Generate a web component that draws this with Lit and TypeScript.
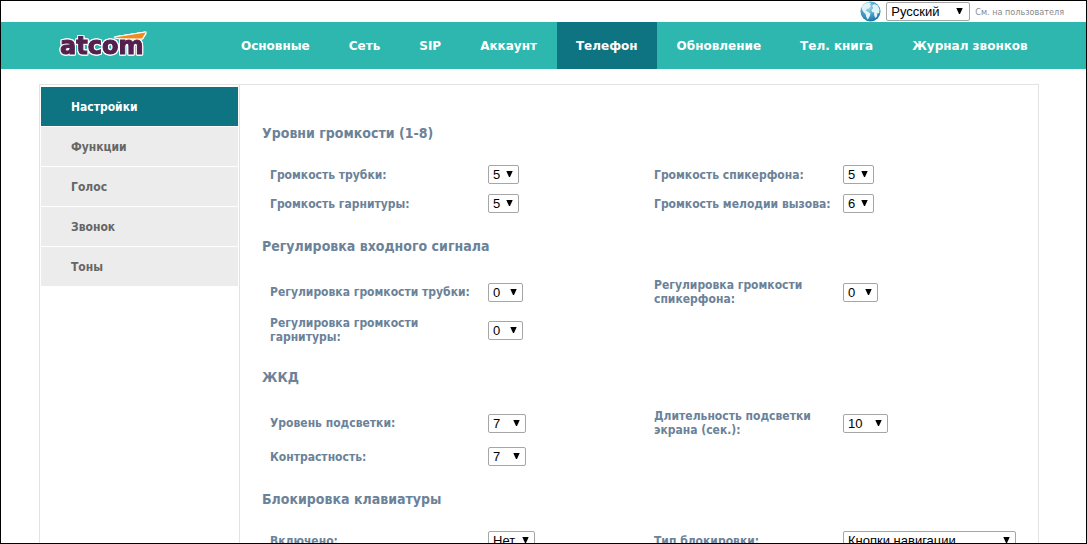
import { LitElement, html, css, nothing } from "lit";
import { customElement, property } from "lit/decorators.js";

interface Field {
  id: string;
  label: string;
  value: string;
  size: string;
}

interface Section {
  title: string;
  rows: [Field, Field?][];
}

const NAV = ["Основные", "Сеть", "SIP", "Аккаунт", "Телефон", "Обновление", "Тел. книга", "Журнал звонков"];
const MENU = ["Настройки", "Функции", "Голос", "Звонок", "Тоны"];

const SECTIONS: Section[] = [
  {
    title: "Уровни громкости (1-8)",
    rows: [
      [
        { id: "handset-volume", label: "Громкость трубки:", value: "5", size: "xs" },
        { id: "speaker-volume", label: "Громкость спикерфона:", value: "5", size: "xs" },
      ],
      [
        { id: "headset-volume", label: "Громкость гарнитуры:", value: "5", size: "xs" },
        { id: "ring-volume", label: "Громкость мелодии вызова:", value: "6", size: "xs" },
      ],
    ],
  },
  {
    title: "Регулировка входного сигнала",
    rows: [
      [
        { id: "handset-gain", label: "Регулировка громкости трубки:", value: "0", size: "s" },
        { id: "speaker-gain", label: "Регулировка громкости спикерфона:", value: "0", size: "s" },
      ],
      [{ id: "headset-gain", label: "Регулировка громкости гарнитуры:", value: "0", size: "s" }],
    ],
  },
  {
    title: "ЖКД",
    rows: [
      [
        { id: "backlight", label: "Уровень подсветки:", value: "7", size: "m" },
        { id: "backlight-time", label: "Длительность подсветки экрана (сек.):", value: "10", size: "l" },
      ],
      [{ id: "contrast", label: "Контрастность:", value: "7", size: "m" }],
    ],
  },
  {
    title: "Блокировка клавиатуры",
    rows: [
      [
        { id: "lock", label: "Включено:", value: "Нет", size: "word" },
        { id: "lock-type", label: "Тип блокировки:", value: "Кнопки навигации", size: "xl" },
      ],
    ],
  },
];

const selectStyles = css`
  select {
    appearance: none;
    box-sizing: border-box;
    height: 19px;
    margin: 0;
    padding: 0 14px 0 4px;
    border: 1px solid #a6a6a6;
    border-radius: 2px;
    background: #fff
      url("data:image/svg+xml,%3Csvg xmlns='http://www.w3.org/2000/svg' width='7' height='6'%3E%3Cpath d='M.3 0h6.400L4 6H3z'/%3E%3C/svg%3E")
      no-repeat right 5px top 5px;
    color: #000;
    font: 13px/17px "Liberation Sans", Arial, sans-serif;
  }
`;

@customElement("atcom-logo")
class AtcomLogo extends LitElement {
  static styles = css`
    :host {
      display: block;
    }
    svg {
      display: block;
    }
    .mark {
      filter: drop-shadow(1px 0 #fff) drop-shadow(-1px 0 #fff) drop-shadow(0 1px #fff) drop-shadow(0 -1px #fff);
    }
    .word {
      font: bold 24px "DejaVu Sans", Verdana, sans-serif;
      fill: #54204f;
      stroke: #54204f;
      stroke-width: 1px;
    }
  `;
  render() {
    return html`<svg width="100" height="38" viewBox="0 0 100 38" role="img" aria-label="atcom">
      <g class="mark">
        <text class="word" x="2" y="26">atcom</text>
        <path d="M56 9.400 L87.800 4.500 L84 10.600 L62 10.200 Z" fill="#f28a1c" />
      </g>
    </svg>`;
  }
}

@customElement("setting-field")
class SettingField extends LitElement {
  @property({ attribute: false }) field!: Field;

  static styles = [
    selectStyles,
    css`
      :host {
        display: contents;
      }
      label {
        align-self: center;
        padding: 5px 0;
        color: #6b8299;
        font-weight: bold;
        font-size: 12px;
        line-height: 14px;
      }
      select {
        align-self: center;
        justify-self: start;
      }
      .xs {
        width: 31px;
      }
      .s {
        width: 35px;
      }
      .m {
        width: 38px;
      }
      .l {
        width: 45px;
      }
      .word {
        width: 47px;
      }
      .xl {
        width: 173px;
      }
    `,
  ];

  render() {
    const f = this.field;
    return html`<label for=${f.id}>${f.label}</label>
      <select id=${f.id} class=${f.size}>
        <option>${f.value}</option>
      </select>`;
  }
}

@customElement("app-root")
class AppRoot extends LitElement {
  static styles = [
    selectStyles,
    css`
      :host {
        display: flex;
        flex-direction: column;
        box-sizing: border-box;
        height: 100vh;
        overflow: hidden;
        border: 1px solid #000;
        background: #fff;
        font-family: "DejaVu Sans Condensed", Tahoma, "Noto Sans", sans-serif;
      }
      a {
        text-decoration: none;
      }
      .top {
        display: flex;
        flex: none;
        align-items: center;
        justify-content: flex-end;
        gap: 5px;
        height: 21px;
        padding-right: 22px;
      }
      .top svg {
        display: block;
      }
      .top a {
        color: #8a8a8a;
        font-size: 9px;
      }
      .lang {
        width: 84px;
        background-position: right 6px top 5px;
      }
      .nav {
        display: flex;
        flex: none;
        gap: 1px;
        padding-left: 57px;
        background: #2db7ae;
      }
      .nav atcom-logo {
        flex: none;
        width: 163px;
        height: 41px;
        padding-top: 6px;
      }
      .nav a {
        padding: 1px 19px 0;
        color: #fff;
        font: bold 12px/46px "DejaVu Sans", Verdana, sans-serif;
        white-space: nowrap;
      }
      .nav .active,
      .menu .active {
        background: #0e7482;
        color: #fff;
      }
      .page {
        display: flex;
        flex: 1 0 auto;
        margin: 15px 47px 0 38px;
        border: 1px solid #e3e3e3;
        border-bottom: 0;
      }
      .menu {
        display: flex;
        flex: none;
        flex-direction: column;
        gap: 1px;
        box-sizing: border-box;
        width: 200px;
        padding: 2px 1px;
        border-right: 1px solid #e3e3e3;
      }
      .menu a {
        padding: 1px 0 0 30px;
        background: #ececec;
        color: #666;
        font-weight: bold;
        font-size: 12px;
        line-height: 38px;
      }
      .content {
        flex: 1;
        padding: 20px 0 0 22px;
      }
      h2 {
        margin: 0;
        padding: 19px 0 18px;
        color: #6b8299;
        font-size: 14px;
        line-height: 18px;
      }
      .row {
        display: grid;
        grid-template-columns: 218fr 166fr 189fr 195fr;
        min-height: 29px;
        padding-left: 8px;
      }
    `,
  ];

  render() {
    return html`
      <div class="top">
        <svg width="21" height="21" viewBox="0 0 21 21" aria-hidden="true">
          <defs>
            <radialGradient id="sea" cx=".4" cy=".3" r=".75">
              <stop offset="0" stop-color="#a8dcf0" />
              <stop offset=".55" stop-color="#3d9cc8" />
              <stop offset="1" stop-color="#1c6c9c" />
            </radialGradient>
          </defs>
          <circle cx="10.500" cy="10.500" r="10" fill="url(#sea)" />
          <path d="M1.500 6.500 C3 3.500 5.500 1.800 8.500 1.200 L11 2.200 L9.800 3.600 L11 5 L9 7.200 L6.800 8 L5.800 9.800 L8.200 10.800 L10.400 12.400 L9.800 15 L7.800 18.800 L6.300 16 L5.600 13 L3.500 11 L2 8.500 Z" fill="#e4f3f5" />
          <path d="M12 4.800 L14.200 3 L17.500 4.200 L19.600 8.300 L19.200 12.500 L17.500 12 L17 15.500 L15.200 17 L14 13.800 L14.200 11.600 L12 11 L11.500 8.700 L13.200 7.200 Z" fill="#e4f3f5" />
        </svg>
        <select class="lang" aria-label="Язык">
          <option>Русский</option>
        </select>
        <a href="#">См. на пользователя</a>
      </div>
      <nav class="nav">
        <atcom-logo></atcom-logo>
        ${NAV.map((t) => html`<a href="#" class=${t === "Телефон" ? "active" : nothing}>${t}</a>`)}
      </nav>
      <div class="page">
        <nav class="menu">
          ${MENU.map((t, i) => html`<a href="#" class=${i === 0 ? "active" : nothing}>${t}</a>`)}
        </nav>
        <main class="content">
          ${SECTIONS.map(
            (s) => html`<section>
              <h2>${s.title}</h2>
              ${s.rows.map(
                (r) => html`<div class="row">
                  ${r.map((f) => (f ? html`<setting-field .field=${f}></setting-field>` : nothing))}
                </div>`
              )}
            </section>`
          )}
        </main>
      </div>
    `;
  }
}
